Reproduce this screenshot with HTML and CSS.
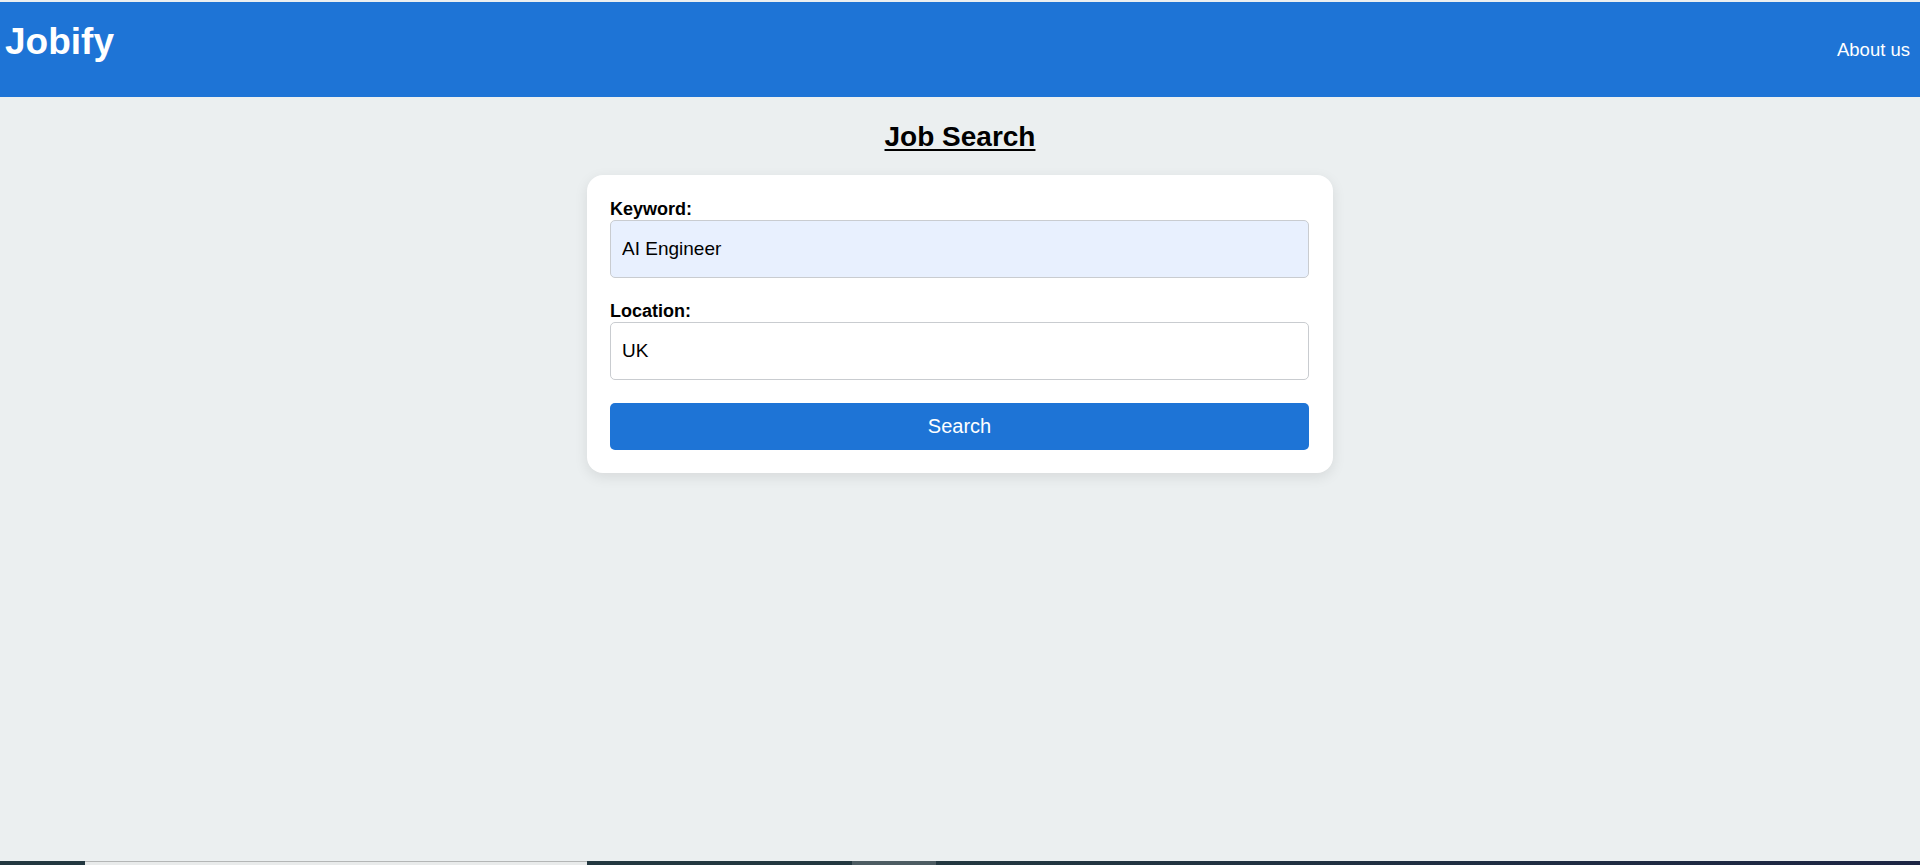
FILE: index.html
```html
<!DOCTYPE html>
<html lang="en">
<head>
<meta charset="utf-8">
<title>Jobify</title>
<link rel="stylesheet" href="styles.css">
</head>
<body>
<div class="page">
  <header class="topbar">
    <div class="logo">Jobify</div>
    <a class="nav-link" href="#">About us</a>
  </header>
  <main class="content">
    <h2 class="title">Job Search</h2>
    <form class="card">
      <div class="field">
        <label class="label" for="kw">Keyword:</label>
        <input class="input input-filled" id="kw" type="text" value="AI Engineer">
      </div>
      <div class="field">
        <label class="label" for="loc">Location:</label>
        <input class="input" id="loc" type="text" value="UK">
      </div>
      <button class="btn" type="button">Search</button>
    </form>
  </main>
  <div class="taskbar">
    <span class="tb-seg tb-dark tb-a"></span>
    <span class="tb-seg tb-light tb-b"></span>
    <span class="tb-seg tb-dark tb-c"></span>
    <span class="tb-seg tb-mid tb-d"></span>
    <span class="tb-seg tb-grad tb-e"></span>
  </div>
</div>
</body>
</html>
```

FILE: styles.css
```css
* { box-sizing: border-box; }
html, body { margin: 0; padding: 0; height: 100%; }
body {
  background: #ebeff0;
  font-family: "Liberation Sans", Arial, sans-serif;
  color: #000;
}
.page {
  min-height: 100vh;
  display: flex;
  flex-direction: column;
  padding-top: 2px;
}
.topbar {
  height: 95px;
  background: #1e74d6;
  display: flex;
  justify-content: space-between;
  align-items: center;
  padding: 0 10px 0 5px;
  flex-shrink: 0;
}
.logo {
  align-self: flex-start;
  margin-top: 19px;
  font-size: 37px;
  font-weight: bold;
  color: #fff;
  line-height: normal;
}
.nav-link {
  color: #fff;
  text-decoration: none;
  font-size: 18.5px;
  margin-top: 1px;
}
.content {
  flex: 1;
  display: flex;
  flex-direction: column;
  align-items: center;
}
.title {
  margin: 24px 0 22px;
  font-size: 28px;
  font-weight: bold;
  text-decoration: underline;
  text-underline-offset: 3px;
  line-height: normal;
}
.card {
  width: 746px;
  background: #fff;
  border-radius: 16px;
  padding: 24px 24px 23px 23px;
  box-shadow: 0 4px 14px rgba(0, 0, 0, 0.09);
  display: flex;
  flex-direction: column;
}
.field {
  display: flex;
  flex-direction: column;
  margin-bottom: 23px;
}
.label {
  font-size: 18px;
  font-weight: bold;
  margin-bottom: 0;
}
.input {
  height: 58px;
  border: 1px solid #c9ccd0;
  border-radius: 5px;
  padding: 0 11px;
  font-family: "Liberation Sans", Arial, sans-serif;
  font-size: 19px;
  color: #000;
  background: #fff;
  outline: none;
}
.input-filled {
  background: #e8f0fe;
}
.btn {
  height: 47px;
  border: none;
  border-radius: 5px;
  background: #1e74d6;
  color: #fff;
  font-family: "Liberation Sans", Arial, sans-serif;
  font-size: 20px;
  cursor: pointer;
}
.taskbar {
  height: 4px;
  display: flex;
  flex-shrink: 0;
}
.tb-seg { display: block; height: 100%; }
.tb-dark { background: #233840; }
.tb-light { background: #e9ebeb; border-top: 1px solid #b4b6b6; }
.tb-mid { background: #4d5c62; }
.tb-grad { background: linear-gradient(to right, #233840, #1d2543); }
.tb-a { width: 85px; }
.tb-b { width: 502px; }
.tb-c { width: 265px; }
.tb-d { width: 84px; }
.tb-e { flex: 1; }
```
